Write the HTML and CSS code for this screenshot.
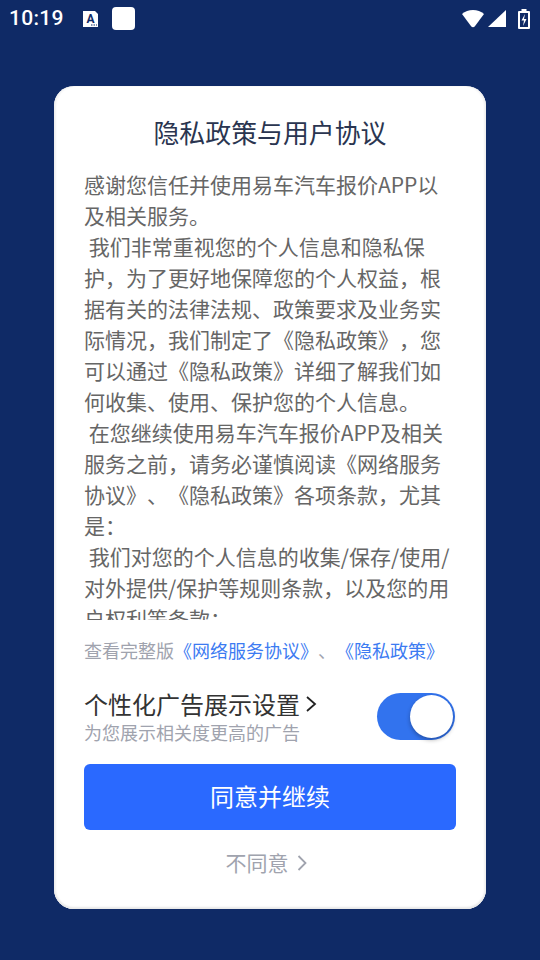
FILE: index.html
```html
<!DOCTYPE html>
<html lang="zh">
<head>
<meta charset="utf-8">
<title>隐私政策与用户协议</title>
<link rel="stylesheet" href="styles.css">
</head>
<body>
<div class="status">
  <div class="status-left">
    <span class="time">10:19</span>
    <svg class="ic-a" width="15" height="16" viewBox="0 0 15 16"><path d="M0 0h12l3 3v13H0z" fill="#fff"/><text x="7.5" y="11.500" class="ic-a-t">A</text><path d="M8 14h1.500M10.500 14h1.500M13 14h1" stroke="#0f2a66" stroke-width="1.200"/></svg>
    <span class="square"></span>
  </div>
  <div class="status-right">
    <svg class="wifi" width="22" height="18" viewBox="0 0 22 18"><path d="M0 4C3 1.400 6.800 0 11 0s8 1.400 11 4L12.700 16.500c-.9 1.100-2.500 1.100-3.400 0z" fill="#fff"/></svg>
    <svg class="signal" width="18" height="17" viewBox="0 0 18 17"><path d="M18 0v17H0z" fill="#fff"/></svg>
    <svg width="12" height="20" viewBox="0 0 12 20"><path fill-rule="evenodd" d="M3.500 0h5v2H11a1 1 0 0 1 1 1v16a1 1 0 0 1-1 1H1a1 1 0 0 1-1-1V3a1 1 0 0 1 1-1h2.500zM2 4v14h8V4z" fill="#fff"/><path d="M7 5 3.500 11.500H6L5 17l3.500-7H6z" fill="#fff"/></svg>
  </div>
</div>
<main class="card">
  <h1 class="title">隐私政策与用户协议</h1>
  <div class="scroll">
    <p>感谢您信任并使用易车汽车报价APP以及相关服务。</p>
    <p>&nbsp;我们非常重视您的个人信息和隐私保护，为了更好地保障您的个人权益，根据有关的法律法规、政策要求及业务实际情况，我们制定了《隐私政策》，您可以通过《隐私政策》详细了解我们如何收集、使用、保护您的个人信息。</p>
    <p>&nbsp;在您继续使用易车汽车报价APP及相关服务之前，请务必谨慎阅读《网络服务协议》、《隐私政策》各项条款，尤其是：</p>
    <p>&nbsp;我们对您的个人信息的收集/保存/使用/对外提供/保护等规则条款，以及您的用户权利等条款；</p>
  </div>
  <p class="links">查看完整版<a class="link">《网络服务协议》</a>、<a class="link">《隐私政策》</a></p>
  <div class="setting">
    <div class="setting-text">
      <div class="setting-title">个性化广告展示设置
        <svg width="12" height="18" viewBox="0 0 12 18"><path d="M2 2l8 7-8 7" fill="none" stroke="#222" stroke-width="1.800"/></svg>
      </div>
      <div class="setting-sub">为您展示相关度更高的广告</div>
    </div>
    <div class="toggle"><span class="knob"></span></div>
  </div>
  <button class="agree">同意并继续</button>
  <div class="decline">不同意
    <svg width="10" height="16" viewBox="0 0 10 16"><path d="M1.500 1l7 7-7 7" fill="none" stroke="#a0a3ae" stroke-width="1.800"/></svg>
  </div>
</main>
</body>
</html>
```
FILE: styles.css
```css
* { box-sizing: border-box; }
html, body { margin: 0; height: 960px; overflow: hidden; }
body {
  background: #0f2a66;
  font-family: "Noto Sans CJK SC", "Noto Sans", sans-serif;
  text-spacing-trim: space-all;
  font-kerning: none;
}
.status {
  height: 38px;
  padding: 0 10px 1px 9px;
  display: flex;
  justify-content: space-between;
  align-items: center;
  color: #fff;
}
.status-left { display: flex; align-items: center; }
.time { font: 500 21px/37px Roboto, sans-serif; letter-spacing: .3px; width: 74px; }
.ic-a-t { font: 700 12px Roboto, sans-serif; fill: #0f2a66; text-anchor: middle; }
.square { width: 23px; height: 23px; margin-left: 14px; border-radius: 4px; background: #fff; }
.status-right { display: flex; align-items: center; }
.wifi { margin-right: 4px; }
.signal { margin-right: 12px; }
.card {
  width: 432px;
  height: 823px;
  margin: 48px 0 0 54px;
  padding: 27px 30px 0;
  background: #fff;
  border-radius: 20px;
  box-shadow: inset 0 -2px 2px #e8e8e8, inset 2px 0 2px #f2f2f2, inset -2px 0 2px #f2f2f2;
}
.title {
  margin: 0;
  font-size: 25.900px;
  font-weight: 400;
  line-height: 38px;
  text-align: center;
  color: #2a3550;
}
.scroll {
  height: 451px;
  margin-top: 18px;
  overflow: hidden;
  font-size: 21px;
  line-height: 31px;
  color: #666;
}
.scroll p { margin: 0; }
.links {
  margin: 17px 0 0;
  font-size: 18px;
  line-height: 26px;
  color: #a0a3ae;
  white-space: nowrap;
}
.link { color: #3c7bf2; }
.setting {
  display: flex;
  justify-content: space-between;
  align-items: center;
  margin-top: 25px;
  height: 57px;
}
.setting-title {
  display: flex;
  align-items: center;
  gap: 5px;
  margin-bottom: 1px;
  font-size: 24px;
  line-height: 31px;
  color: #333;
}
.setting-sub { font-size: 18px; line-height: 25px; color: #a0a3ae; }
.toggle {
  position: relative;
  width: 78px;
  height: 47px;
  margin-right: 1px;
  border-radius: 24px;
  background: #3273ee;
}
.knob {
  position: absolute;
  top: 2px;
  right: 2px;
  width: 43px;
  height: 43px;
  border-radius: 50%;
  background: #fff;
  box-shadow: 0 2px 4px rgba(0,0,0,.3);
}
.agree {
  display: block;
  width: 372px;
  height: 66px;
  margin-top: 19px;
  padding: 0 0 3px;
  border: 0;
  border-radius: 6px;
  background: #2a69ff;
  color: #fff;
  font: 400 24px/63px "Noto Sans CJK SC", sans-serif;
  text-align: center;
}
.decline {
  display: flex;
  justify-content: center;
  align-items: center;
  gap: 8px;
  margin-top: 17px;
  padding-right: 8px;
  font-size: 21px;
  line-height: 31px;
  color: #a0a3ae;
}
```
